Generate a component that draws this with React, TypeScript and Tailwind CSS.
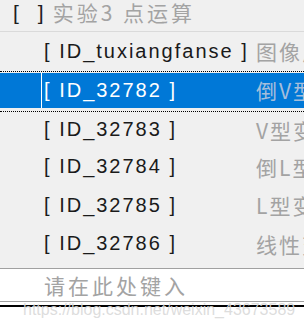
import React from "react";

const latin = "font-['Liberation_Sans',Arial,sans-serif]";
const cjk = "font-['Noto_Sans_CJK_SC','Noto_Sans',sans-serif]";

type Item = { id: string; label: string; h: string };

const rest: Item[] = [
  { id: "ID_32783", label: "V型变换", h: "h-[36px]" },
  { id: "ID_32784", label: "倒L型变换", h: "h-[38px]" },
  { id: "ID_32785", label: "L型变换", h: "h-[39px]" },
  { id: "ID_32786", label: "线性变换", h: "h-[38px]" },
];

function Row({ item, selected = false }: { item: Item; selected?: boolean }) {
  return (
    <div className={`flex items-center overflow-hidden whitespace-nowrap ${item.h}`}>
      <div className="w-[256px] shrink-0 pl-[44px]">
        <span
          className={`${latin} text-[20px] leading-none tracking-[2px] ${
            selected ? "text-white" : "text-[#1a1a1a]"
          }`}
        >
          [ {item.id} ]
        </span>
      </div>
      <span
        className={`${cjk} shrink-0 text-[21px] leading-none tracking-[2px] ${
          selected ? "text-[#a5bedb]" : "text-[#a3a3a3]"
        }`}
      >
        {item.label}
      </span>
    </div>
  );
}

export default function App() {
  return (
    <div className="relative h-[330px] w-[304px] overflow-hidden bg-white">
      {/* Title */}
      <div className="flex h-[32px] items-center border-b border-[#dadada] bg-[#f0f0f0] pb-[7px] pl-[13px]">
        <span className={`${latin} text-[21px] leading-none text-[#1e1e1e]`}>[</span>
        <span className={`${latin} ml-[19px] text-[21px] leading-none text-[#1e1e1e]`}>]</span>
        <span className={`${cjk} ml-[9px] whitespace-pre text-[21px] leading-none tracking-[3px] text-[#a3a3a3]`}>
          实验3 点运算
        </span>
      </div>

      {/* List */}
      <div className="bg-[#f0f0f0]">
        <Row item={{ id: "ID_tuxiangfanse", label: "图像反色", h: "h-[39px]" }} />

        {/* Selected item with focus rectangle */}
        <div className="border-y border-dotted border-black pt-px pb-[3px]">
          <div className="flex h-[35px] bg-[#0078d7]">
            <div className="w-[41px] shrink-0" />
            <div className="w-px shrink-0 bg-white" />
            <div className="flex-1 overflow-hidden">
              <div className="-ml-[42px]">
                <Row item={{ id: "ID_32782", label: "倒V型变换", h: "h-[35px]" }} selected />
              </div>
            </div>
          </div>
        </div>

        {rest.map((it) => (
          <Row key={it.id} item={it} />
        ))}
        <div className="h-[5px]" />
      </div>

      {/* Input line */}
      <div className="flex h-[34px] items-center border-y border-[#a0a0a0] bg-white pl-[44px]">
        <span className={`${cjk} text-[21px] leading-none tracking-[3px] text-[#a3a3a3]`}>请在此处键入</span>
      </div>
      <div className="mt-[3px] h-[2px] bg-black" />

      {/* Watermark */}
      <div
        className={`${latin} pointer-events-none absolute left-[23px] top-[302px] text-[16px] leading-none text-[#d9d9d9]/90`}
      >
        https://blog.csdn.net/weixin_43673589
      </div>
    </div>
  );
}
